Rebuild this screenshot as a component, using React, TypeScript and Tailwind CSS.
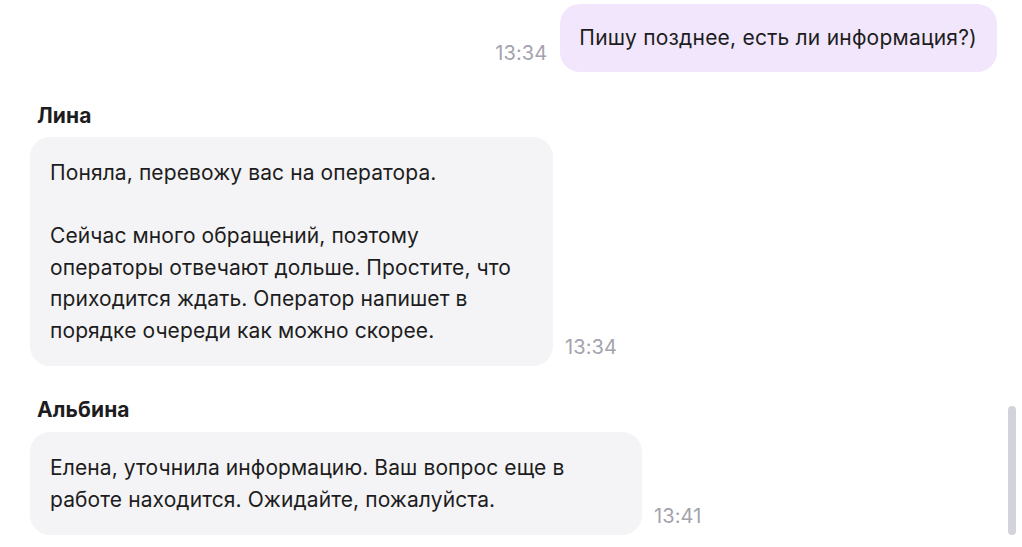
import React from "react";

const font = { fontFamily: "Inter, 'Noto Sans', sans-serif" };

function Time({ t }: { t: string }) {
  return (
    <div className="text-[20px] leading-[24px] text-[#a3a3ad] mb-[7px] shrink-0">{t}</div>
  );
}

export default function App() {
  return (
    <div
      className="relative w-[1022px] h-[547px] overflow-hidden bg-white text-[#1d1d21]"
      style={font}
    >
      <div className="flex flex-col pl-[30px] pr-[25px] pt-[4px] tracking-[0.1px]">
        <div className="flex justify-end items-end gap-[13px]">
          <Time t="13:34" />
          <div className="bg-[#f2e6fc] rounded-[20px] pl-[19px] pr-[20px] py-[20px] text-[21px] leading-[28px] tracking-[0.22px]">
            Пишу позднее, есть ли информация?)
          </div>
        </div>

        <div className="mt-[32px] ml-[7px] text-[21px] leading-[24px] font-bold">Лина</div>
        <div className="mt-[9px] flex items-end gap-[12px]">
          <div className="w-[523px] bg-[#f4f4f6] rounded-[20px] px-[20px] py-[20px] text-[21px] leading-[31.5px]">
            <p>Поняла, перевожу вас на оператора.</p>
            <p className="mt-[31.5px]">
              Сейчас много обращений, поэтому
              <br />
              операторы отвечают дольше. Простите, что
              <br />
              приходится ждать. Оператор напишет в
              <br />
              порядке очереди как можно скорее.
            </p>
          </div>
          <Time t="13:34" />
        </div>

        <div className="mt-[32px] ml-[7px] text-[21px] leading-[24px] font-bold">Альбина</div>
        <div className="mt-[10px] flex items-end gap-[12px]">
          <div className="w-[612px] bg-[#f4f4f6] rounded-[20px] px-[20px] py-[20px] text-[21px] leading-[31.5px]">
            Елена, уточнила информацию. Ваш вопрос еще в
            <br />
            работе находится. Ожидайте, пожалуйста.
          </div>
          <Time t="13:41" />
        </div>
      </div>

      <div className="absolute left-[1008px] top-[406px] w-[8px] h-[129px] rounded-full bg-[#d3d3db]" />
    </div>
  );
}
